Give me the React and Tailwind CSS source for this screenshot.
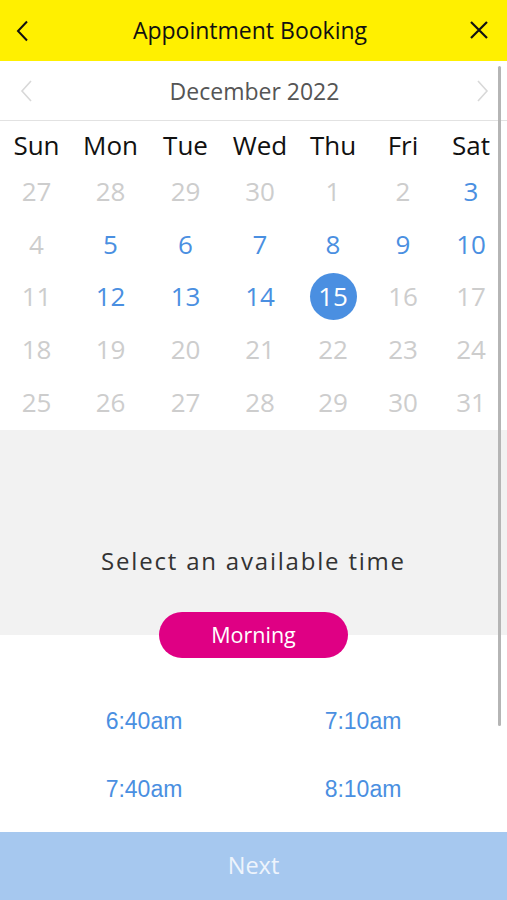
const weeks = [
  [[27, "off"], [28, "off"], [29, "off"], [30, "off"], [1, "off"], [2, "off"], [3, "on"]],
  [[4, "off"], [5, "on"], [6, "on"], [7, "on"], [8, "on"], [9, "on"], [10, "on"]],
  [[11, "off"], [12, "on"], [13, "on"], [14, "on"], [15, "sel"], [16, "off"], [17, "off"]],
  [[18, "off"], [19, "off"], [20, "off"], [21, "off"], [22, "off"], [23, "off"], [24, "off"]],
  [[25, "off"], [26, "off"], [27, "off"], [28, "off"], [29, "off"], [30, "off"], [31, "off"]],
];

const dayNames = ["Sun", "Mon", "Tue", "Wed", "Thu", "Fri", "Sat"];
const cols = "grid grid-cols-[73px_75px_75px_74px_72px_68px_68px]";

const App = () => {
  return (
    <div className="relative w-[507px] h-[900px] flex flex-col bg-white overflow-hidden font-['Open_Sans',sans-serif]">
      {/* Header */}
      <div className="h-[61px] bg-[#fff000] flex items-center justify-between px-[14px] shrink-0">
        <svg width="16" height="22" viewBox="0 0 16 22" className="ml-[1px]">
          <path d="M12 1.5 L3 11 L12 20.5" fill="none" stroke="#111" strokeWidth="2" />
        </svg>
        <h1 className="text-[23px] text-[#111] leading-none -mt-[1px]">Appointment Booking</h1>
        <svg width="20" height="20" viewBox="0 0 20 20" className="mr-[4px] -mt-[2px]">
          <path d="M2 2 L18 18 M18 2 L2 18" fill="none" stroke="#111" strokeWidth="2.2" />
        </svg>
      </div>

      {/* Month switcher */}
      <div className="h-[60px] flex items-center justify-between px-[19px] border-b border-[#e2e2e2] shrink-0">
        <svg width="14" height="24" viewBox="0 0 14 24">
          <path d="M12 2 L3 12 L12 22" fill="none" stroke="#d8d8d8" strokeWidth="1.6" />
        </svg>
        <span className="text-[23px] text-[#555] leading-none mt-[1px]">December 2022</span>
        <svg width="14" height="24" viewBox="0 0 14 24" className="mr-[-2px]">
          <path d="M2 2 L11 12 L2 22" fill="none" stroke="#d8d8d8" strokeWidth="1.6" />
        </svg>
      </div>

      {/* Calendar */}
      <div className="pt-[6px] pb-[2px] shrink-0">
        <div className={`${cols} h-[36px] items-center`}>
          {dayNames.map((d) => (
            <div key={d} className="text-center text-[26px] text-[#111] leading-none">
              {d}
            </div>
          ))}
        </div>
        <div className="pt-[2px]">
          {weeks.map((week, i) => (
            <div key={i} className={`${cols} h-[52.6px] items-center`}>
              {week.map(([n, s], j) => (
                <div key={j} className="flex justify-center">
                  {s === "sel" ? (
                    <div className="w-[47px] h-[47px] rounded-full bg-[#4a8fe1] text-white flex items-center justify-center text-[26px] leading-none">
                      {n}
                    </div>
                  ) : (
                    <span
                      className={`text-[26px] leading-none ${s === "on" ? "text-[#4a8fe1]" : "text-[#cdcdcd]"}`}
                    >
                      {n}
                    </span>
                  )}
                </div>
              ))}
            </div>
          ))}
        </div>
      </div>

      {/* Select time */}
      <div className="bg-[#f2f2f2] h-[205px] shrink-0 flex flex-col items-center justify-end">
        <p className="text-[24px] text-[#333] tracking-[1.8px] leading-none mb-[62px]">
          Select an available time
        </p>
      </div>

      {/* Morning pill overlaps band edge */}
      <div className="flex justify-center -mt-[23px] shrink-0">
        <div className="w-[189px] h-[46px] rounded-full bg-[#df0084] text-white text-[21.5px] flex items-center justify-center leading-none">
          Morning
        </div>
      </div>

      {/* Time slots */}
      <div className="grid grid-cols-[288px_150px] mt-[52px] gap-y-[45px] font-['Liberation_Sans',Arial,sans-serif] text-[23px] text-[#4a8fe1] leading-none">
        <div className="text-center">6:40am</div>
        <div className="text-center">7:10am</div>
        <div className="text-center">7:40am</div>
        <div className="text-center">8:10am</div>
      </div>

      <div className="flex-1" />

      {/* Next */}
      <div className="h-[68px] bg-[#a6c8ef] flex items-center justify-center shrink-0">
        <span className="text-[23.5px] text-[#eef4fc] leading-none">Next</span>
      </div>

      {/* Scrollbar */}
      <div className="absolute left-[498px] top-[66px] w-[3px] h-[660px] rounded-full bg-[#b5b5b5]" />
    </div>
  );
};

export default App;
